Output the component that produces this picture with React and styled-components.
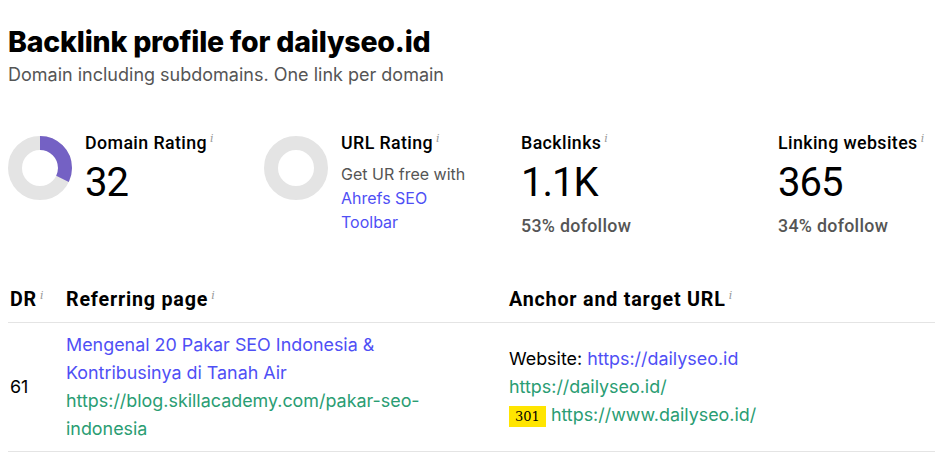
import React from "react";
import styled, { createGlobalStyle } from "styled-components";

const HEAD_FONT = "'Roboto', 'Liberation Sans', sans-serif";
const BODY_FONT = "'Inter', 'Noto Sans', sans-serif";

const BLUE  = "#4f4ff5";
const GREEN = "#2a9d73";

const GlobalStyle = createGlobalStyle`
  body {
    margin: 0;
    background: #fff;
    color: #000;
    font-family: ${BODY_FONT};
  }
`;

const stats = [
  { label: "Domain Rating", value: "32", ring: 32 },
  { label: "URL Rating", ring: 0, promo: true },
  { label: "Backlinks", value: "1.1K", note: "53% dofollow" },
  { label: "Linking websites", value: "365", note: "34% dofollow" },
];

function Ring({ percent }) {
  const r = 25;
  const c = 2 * Math.PI * r;
  return (
    <svg width="64" height="64" viewBox="0 0 64 64">
      <circle cx="32" cy="32" r={r} fill="none" stroke="#e4e4e4" strokeWidth="14" />
      {percent > 0 && (
        <circle
          cx="32" cy="32" r={r} fill="none" stroke="#7461c4" strokeWidth="14"
          strokeDasharray={`${(c * percent) / 100} ${c}`}
          transform="rotate(-90 32 32)"
        />
      )}
    </svg>
  );
}

const Info = () => <Hint>i</Hint>;

export default function App() {
  return (
    <>
      <GlobalStyle />
      <Page>
        <Title>Backlink profile for dailyseo.id</Title>
        <Subtitle>Domain including subdomains. One link per domain</Subtitle>

        <Stats>
          {stats.map((s) => (
            <Stat key={s.label}>
              {s.ring !== undefined && <Ring percent={s.ring} />}
              <StatBody>
                <StatLabel>{s.label}<Info /></StatLabel>
                {s.value && <StatValue>{s.value}</StatValue>}
                {s.note && <StatNote>{s.note}</StatNote>}
                {s.promo && (
                  <Promo>
                    Get UR free with <Link>Ahrefs SEO Toolbar</Link>
                  </Promo>
                )}
              </StatBody>
            </Stat>
          ))}
        </Stats>

        <Table>
          <colgroup>
            <col style={{ width: 56 }} />
            <col style={{ width: 443 }} />
            <col />
          </colgroup>
          <thead>
            <tr>
              <Th>DR<Info /></Th>
              <Th>Referring page<Info /></Th>
              <Th>Anchor and target URL<Info /></Th>
            </tr>
          </thead>
          <tbody>
            <tr>
              <Td>61</Td>
              <Td wide>
                <Line><Link>Mengenal 20 Pakar SEO Indonesia &amp; Kontribusinya di Tanah Air</Link></Line>
                <Line><Url>https://blog.skillacademy.com/pakar-seo-indonesia</Url></Line>
              </Td>
              <Td>
                <Line>Website: <Link>https://dailyseo.id</Link></Line>
                <Line><Url>https://dailyseo.id/</Url></Line>
                <Line><Redirect>301</Redirect> <Url>https://www.dailyseo.id/</Url></Line>
              </Td>
            </tr>
          </tbody>
        </Table>
      </Page>
    </>
  );
}

const Page = styled.div`
  padding: 24px 0 0 8px;
`;

const Title = styled.h1`
  margin: 0;
  font-family: ${BODY_FONT};
  font-size: 28.5px;
  line-height: 36px;
  font-weight: 800;
  letter-spacing: -0.2px;
`;

const Subtitle = styled.p`
  margin: 3px 0 0;
  font-size: 18px;
  line-height: 24px;
  color: #555;
`;

const Stats = styled.div`
  display: grid;
  grid-template-columns: 256px 257px 257px 1fr;
  margin-top: 49px;
  white-space: nowrap;
`;

const Stat = styled.div`
  display: flex;
  align-items: flex-start;
  gap: 13px;
`;

const StatBody = styled.div`
  display: flex;
  flex-direction: column;
  margin-top: -5px;
`;

const StatLabel = styled.div`
  font-family: ${HEAD_FONT};
  font-size: 17.8px;
  line-height: 24px;
  font-weight: 500;
  letter-spacing: 0.4px;
`;

const StatValue = styled.div`
  margin-top: 4px;
  font-family: ${HEAD_FONT};
  font-size: 40px;
  line-height: 48px;
  font-weight: 400;
  letter-spacing: -1px;
`;

const StatNote = styled.div`
  margin-top: 7px;
  font-family: ${HEAD_FONT};
  font-size: 17.8px;
  line-height: 24px;
  font-weight: 500;
  letter-spacing: 0.3px;
  color: #555;
`;

const Promo = styled.div`
  margin-top: 7px;
  width: 130px;
  white-space: normal;
  font-size: 16px;
  line-height: 24px;
  color: #555;
`;

const Hint = styled.sup`
  margin-left: 3px;
  font-family: 'DejaVu Serif', serif;
  font-style: italic;
  font-size: 11px;
  font-weight: 400;
  letter-spacing: 0;
  color: #999;
  vertical-align: 7px;
  line-height: 0;
`;

const Link = styled.span`
  color: ${BLUE};
`;

const Url = styled.span`
  color: ${GREEN};
`;

const Table = styled.table`
  margin-top: 44px;
  width: 100%;
  table-layout: fixed;
  border-collapse: collapse;
`;

const Th = styled.th`
  padding: 6px 16px 10px 2px;
  text-align: left;
  font-family: ${HEAD_FONT};
  font-size: 19.7px;
  line-height: 24px;
  font-weight: 700;
  letter-spacing: 0.8px;
  border-bottom: 1px solid #e4e4e4;
  white-space: nowrap;
`;

const Td = styled.td`
  padding: 8px ${(p) => (p.wide ? "40px" : "16px")} 8px 2px;
  vertical-align: middle;
  font-size: 17.9px;
  line-height: 28px;
  border-bottom: 1px solid #e4e4e4;
`;

const Line = styled.div``;

const Redirect = styled.span`
  display: inline-block;
  padding: 0 6px;
  background: #ffe500;
  font-family: 'DejaVu Serif', serif;
  font-size: 13px;
  line-height: 21px;
  color: #000;
`;
